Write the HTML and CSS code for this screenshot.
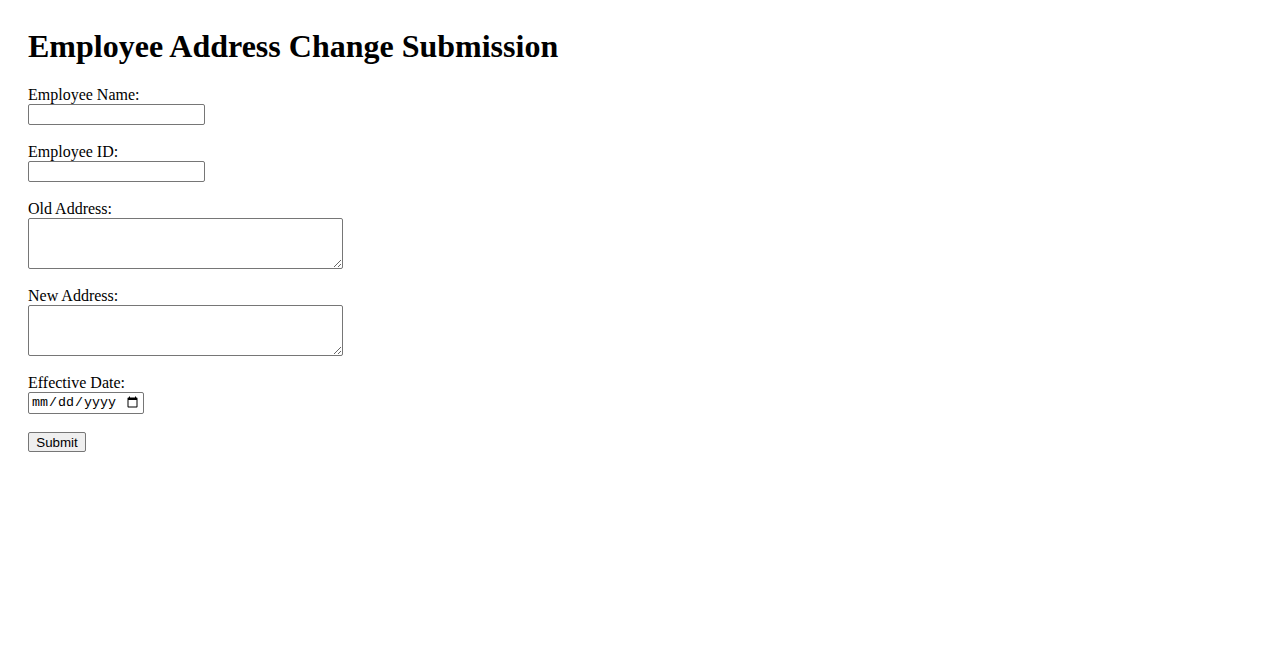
FILE: index.html
```html
<!DOCTYPE html>
<html lang="en">
<head>
<meta charset="utf-8">
<title>Employee Address Change Submission</title>
<link rel="stylesheet" href="styles.css">
</head>
<body>
<h1 class="title">Employee Address Change Submission</h1>
<form class="form">
  <div class="field">
    <label class="label" for="name">Employee Name:</label>
    <input class="text-input" type="text" id="name">
  </div>
  <div class="field">
    <label class="label" for="eid">Employee ID:</label>
    <input class="text-input" type="text" id="eid">
  </div>
  <div class="field">
    <label class="label" for="old">Old Address:</label>
    <textarea class="area" id="old"></textarea>
  </div>
  <div class="field">
    <label class="label" for="new">New Address:</label>
    <textarea class="area" id="new"></textarea>
  </div>
  <div class="field">
    <label class="label" for="date">Effective Date:</label>
    <input class="date-input" type="date" id="date">
  </div>
  <button class="submit" type="submit">Submit</button>
</form>
</body>
</html>
```
FILE: styles.css
```css
html, body {
  background: #ffffff;
}
body {
  margin: 0;
  padding: 28px;
  font-family: "Liberation Serif", serif;
  font-size: 16px;
  color: #000000;
}
.title {
  margin: 0 0 21px;
  font-family: "Liberation Serif", serif;
  font-size: 32px;
  font-weight: bold;
  line-height: 37px;
}
.form {
  margin: 0;
}
.field {
  margin-bottom: 18px;
}
.label {
  display: block;
  height: 18px;
  line-height: 18px;
}
.text-input {
  display: block;
  box-sizing: border-box;
  width: 177px;
  height: 21px;
  margin: 0;
  padding: 1px 2px;
  border: 1px solid #767676;
  border-radius: 2px;
  font-family: "Liberation Sans", sans-serif;
  font-size: 13.33px;
  background: #ffffff;
}
.area {
  display: block;
  box-sizing: border-box;
  width: 315px;
  height: 51px;
  margin: 0;
  padding: 2px;
  border: 1px solid #767676;
  border-radius: 2px;
  font-family: "Liberation Mono", monospace;
  font-size: 13.33px;
  background: #ffffff;
}
.date-input {
  display: block;
  box-sizing: border-box;
  width: 116px;
  height: 22px;
  margin: 0;
  padding: 1px 2px;
  border: 1px solid #767676;
  border-radius: 2px;
  font-family: "Liberation Mono", monospace;
  font-size: 13.33px;
  background: #ffffff;
}
.submit {
  display: block;
  box-sizing: border-box;
  width: 58px;
  height: 20px;
  margin: 0;
  padding: 1px 6px;
  border: 1px solid #767676;
  border-radius: 2px;
  background: #efefef;
  font-family: "Liberation Sans", sans-serif;
  font-size: 13.33px;
  color: #000000;
}
```
